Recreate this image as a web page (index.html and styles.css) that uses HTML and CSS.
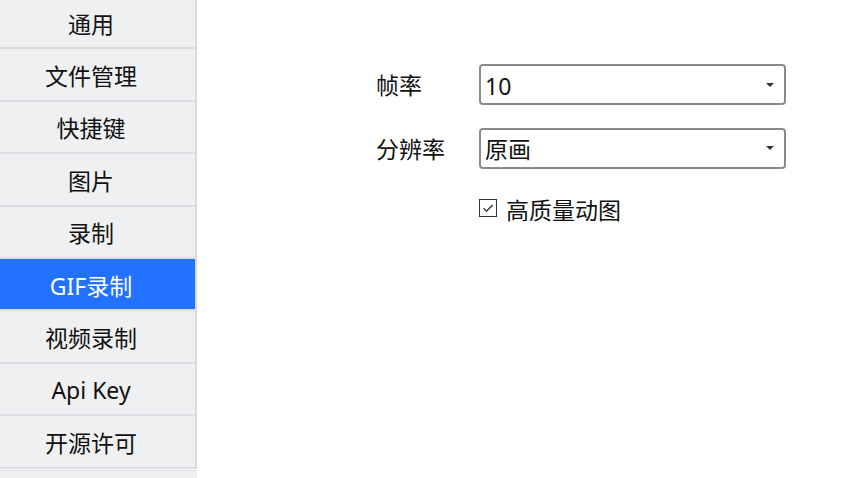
FILE: index.html
```html
<!DOCTYPE html>
<html lang="zh-CN">
<head>
<meta charset="utf-8">
<title>设置</title>
<link rel="stylesheet" href="styles.css">
</head>
<body>
<div class="app">
  <aside class="sidebar">
    <ul class="menu">
      <li class="item">通用</li>
      <li class="item">文件管理</li>
      <li class="item">快捷键</li>
      <li class="item">图片</li>
      <li class="item">录制</li>
      <li class="item active">GIF录制</li>
      <li class="item">视频录制</li>
      <li class="item">Api Key</li>
      <li class="item">开源许可</li>
    </ul>
    <div class="strip"></div>
  </aside>
  <main class="panel">
    <div class="form">
      <label class="label">帧率</label>
      <div class="select"><span class="value">10</span><span class="arrow"></span></div>
      <label class="label">分辨率</label>
      <div class="select"><span class="value">原画</span><span class="arrow"></span></div>
      <div class="check-row">
        <span class="checkbox">
          <svg width="16" height="16" viewBox="0 0 16 16"><path d="M3.5 8.2 L6.6 11.2 L12.6 5" fill="none" stroke="#222" stroke-width="1.2"/></svg>
        </span>
        <span class="check-text">高质量动图</span>
      </div>
    </div>
  </main>
</div>
</body>
</html>
```

FILE: styles.css
```css
* { box-sizing: border-box; }
html, body {
  margin: 0;
  padding: 0;
  background: #ffffff;
  width: 862px;
  height: 478px;
  overflow: hidden;
}
body {
  font-family: "Noto Sans", "Noto Sans CJK SC", sans-serif;
  font-size: 23px;
  color: #111111;
}
.app {
  display: flex;
  height: 478px;
}
.sidebar {
  width: 197px;
  flex: none;
  display: flex;
  flex-direction: column;
  overflow: hidden;
  background: #ffffff;
}
.menu {
  list-style: none;
  margin: -3px 0 0 0;
  padding: 0;
  background: #eff0f2;
  border-right: 2px solid #d9dadc;
}
.item {
  height: 52.4px;
  border-bottom: 2px solid #dcdde0;
  display: flex;
  align-items: center;
  justify-content: center;
  padding: 4px 13px 0 0;
  line-height: 1;
  color: #111111;
}
.item.active {
  background: #2272ff;
  color: #ffffff;
  background-clip: padding-box;
}
.strip {
  margin-top: 1px;
  flex: 1;
  border-top: 1px solid #d6d7da;
  background: #eff0f2;
}
.panel {
  flex: 1;
  padding: 64px 0 0 179px;
}
.form {
  display: grid;
  grid-template-columns: 103px 307px;
  grid-auto-rows: 41px;
  row-gap: 22.5px;
}
.label {
  display: flex;
  align-items: center;
  line-height: 1;
  padding-top: 2px;
}
.select {
  border: 2px solid #8a8a8a;
  border-radius: 4px;
  display: flex;
  align-items: center;
  justify-content: space-between;
  padding: 3px 10px 0 4px;
  line-height: 1;
}
.arrow {
  width: 0;
  height: 0;
  border-left: 4.5px solid transparent;
  border-right: 4.5px solid transparent;
  border-top: 4.5px solid #333333;
  margin-top: -3px;
}
.check-row {
  grid-column: 2;
  display: flex;
  align-items: center;
  gap: 9px;
  height: 41px;
  margin-top: -3.5px;
}
.checkbox {
  width: 18px;
  height: 18px;
  border: 1px solid #333333;
  display: flex;
  align-items: center;
  justify-content: center;
  background: #ffffff;
}
.check-text {
  line-height: 1;
  padding-top: 4px;
}
```
